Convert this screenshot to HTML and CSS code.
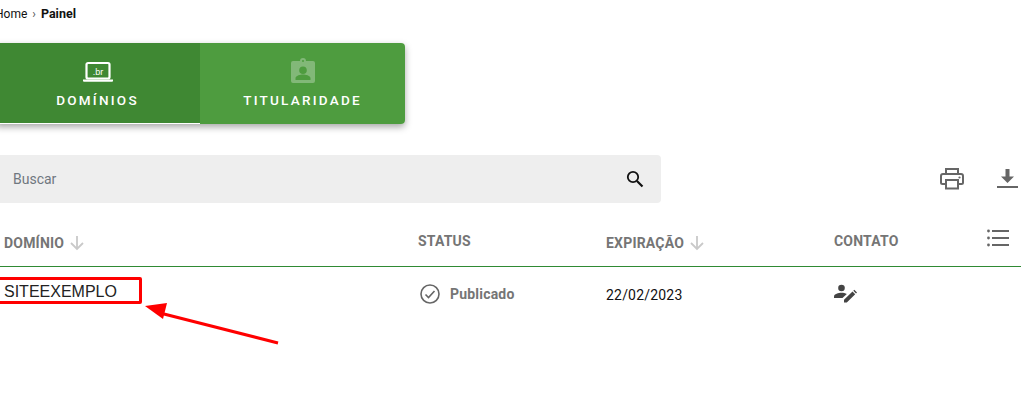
FILE: index.html
```html
<!DOCTYPE html>
<html lang="en">
<head>
    <meta charset="UTF-8">
    <meta name="viewport" content="width=device-width, initial-scale=1.0">
    <title>Painel</title>
    <link rel="stylesheet" href="styles.css">
</head>
<body>
    <div class="page">
        <div class="breadcrumb">
            <span>Home</span>
            <span class="sep">›</span>
            <strong>Painel</strong>
        </div>

        <div class="tabs">
            <div class="tab tab-active">
                <svg class="tab-icon" width="30" height="22" viewBox="0 0 30 22">
                    <rect x="3.500" y="2" width="23" height="15.500" rx="1.500" fill="none" stroke="#fff" stroke-width="2.200"/>
                    <path d="M0 18.500h30v1.300a1 1 0 0 1-1 1H1a1 1 0 0 1-1-1z" fill="#fff"/>
                    <text x="15" y="13.500" class="tab-icon-text">.br</text>
                </svg>
                <span>DOMÍNIOS</span>
            </div>
            <div class="tab">
                <svg class="tab-icon tab-icon-badge" width="24" height="26" viewBox="0 0 24 26">
                    <path d="M2 3h7a3 3 0 0 1 6 0h7a2 2 0 0 1 2 2v18a2 2 0 0 1-2 2H2a2 2 0 0 1-2-2V5a2 2 0 0 1 2-2zm10-1a1 1 0 1 0 0 2 1 1 0 0 0 0-2zm0 6.500a3.800 3.800 0 1 0 0 7.600 3.800 3.800 0 0 0 0-7.600zM4.500 22h15v-1.800c0-2.600-5-3.700-7.500-3.700s-7.500 1.100-7.500 3.700z" fill="#82b878" fill-rule="evenodd"/>
                </svg>
                <span>TITULARIDADE</span>
            </div>
        </div>

        <div class="toolbar">
            <div class="search">
                <span class="search-label">Buscar</span>
                <svg width="18" height="18" viewBox="0 0 18 18">
                    <circle cx="7" cy="7" r="5.200" fill="none" stroke="#111" stroke-width="1.800"/>
                    <path d="M11 11l5.500 5.500" stroke="#111" stroke-width="2.200"/>
                </svg>
            </div>
            <div class="toolbar-icons">
                <svg width="24" height="22" viewBox="0 0 24 22">
                    <path d="M6 6V1h12v5M6 16H2.500A1.500 1.500 0 0 1 1 14.500V8a2 2 0 0 1 2-2h18a2 2 0 0 1 2 2v6.500a1.500 1.500 0 0 1-1.500 1.500H18" fill="none" stroke="#666" stroke-width="2"/>
                    <rect x="6" y="12" width="12" height="8.500" fill="none" stroke="#666" stroke-width="2"/>
                    <circle cx="19.500" cy="9.500" r="1.100" fill="#666"/>
                </svg>
                <svg width="21" height="20" viewBox="0 0 21 20">
                    <path d="M8.500 0h4v7.500h4.500l-6.500 6.500L4 7.500h4.500z" fill="#666"/>
                    <rect x="0" y="17" width="21" height="2" fill="#666"/>
                </svg>
            </div>
        </div>

        <div class="table">
            <div class="row row-head">
                <div class="col col-domain sortable">DOMÍNIO
                    <svg class="sort" width="14" height="16" viewBox="0 0 14 16"><path d="M7 1v13M1 8l6 6 6-6" fill="none" stroke="#c9c9c9" stroke-width="1.800"/></svg>
                </div>
                <div class="col col-status">STATUS</div>
                <div class="col col-exp sortable">EXPIRAÇÃO
                    <svg class="sort" width="14" height="16" viewBox="0 0 14 16"><path d="M7 1v13M1 8l6 6 6-6" fill="none" stroke="#c9c9c9" stroke-width="1.800"/></svg>
                </div>
                <div class="col col-contact">CONTATO</div>
                <svg class="col-menu" width="22" height="18" viewBox="0 0 22 18">
                    <circle cx="1.500" cy="2" r="1.400" fill="#666"/><rect x="5" y="1" width="17" height="2" fill="#666"/>
                    <circle cx="1.500" cy="9" r="1.400" fill="#666"/><rect x="5" y="8" width="17" height="2" fill="#666"/>
                    <circle cx="1.500" cy="16" r="1.400" fill="#666"/><rect x="5" y="15" width="17" height="2" fill="#666"/>
                </svg>
            </div>
            <div class="row row-body">
                <div class="col col-domain domain-name">SITEEXEMPLO</div>
                <div class="col col-status status-cell">
                    <svg width="20" height="20" viewBox="0 0 20 20">
                        <circle cx="10" cy="10" r="9" fill="none" stroke="#666" stroke-width="1.600"/>
                        <path d="M5.500 10.500l3 3 6-6.500" fill="none" stroke="#666" stroke-width="1.600"/>
                    </svg>
                    <span>Publicado</span>
                </div>
                <div class="col col-exp">22/02/2023</div>
                <div class="col col-contact">
                    <svg width="23" height="19" viewBox="0 0 23 19">
                        <circle cx="7.500" cy="4" r="3.300" fill="#444"/>
                        <path d="M0 14v-1.500C0 10 4.500 8.800 7.500 8.800c1.800 0 3.800.4 5.300 1.100L8.500 14z" fill="#444"/>
                        <path d="M10 18.500v-2.800l8.500-8.200 2.700 2.700-8.400 8.300zM19.300 6.700l1-1 2.700 2.700-1 1z" fill="#444"/>
                    </svg>
                </div>
            </div>
        </div>
    </div>

    <!-- annotation drawn over the screenshot -->
    <div class="mark-box"></div>
    <svg class="mark-arrow" width="140" height="50" viewBox="0 0 140 50">
        <path d="M135 41L17 11" stroke="#f00" stroke-width="3" fill="none"/>
        <path d="M2 4l22-3-4 16z" fill="#f00"/>
    </svg>
</body>
</html>
```

FILE: styles.css
```css
body {
    font-family: Roboto, Arial, sans-serif;
    margin: 0;
    background-color: #fff;
    color: #111;
    overflow: hidden;
    height: 405px;
    position: relative;
}
.page {
    margin-left: -5px;
    width: 1026px;
}
.breadcrumb {
    font-size: 12px;
    line-height: 14px;
    padding-top: 7px;
    display: flex;
    gap: 5px;
}
.breadcrumb strong {
    font-size: 12.500px;
    font-weight: 700;
}
.sep {
    color: #555;
}
.tabs {
    display: flex;
    width: 410px;
    height: 81px;
    margin-top: 22px;
    border-radius: 4px;
    box-shadow: 0 3px 7px rgba(0,0,0,0.35);
    overflow: hidden;
}
.tab {
    width: 205px;
    background-color: #4e9c3f;
    color: #fff;
    font-size: 13.500px;
    font-weight: 500;
    letter-spacing: 2.250px;
    display: flex;
    flex-direction: column;
    align-items: center;
    box-sizing: border-box;
    padding-top: 15px;
}
.tab-active {
    background-color: #3f8833;
    border-bottom: 1px solid #fff;
}
.tab-icon {
    margin: 3px 0 9px;
}
.tab-icon-badge {
    margin: 0 0 8px;
}
.tab-icon-text {
    font-size: 9px;
    font-family: "Liberation Sans", sans-serif;
    fill: #fff;
    text-anchor: middle;
    letter-spacing: 0;
}
.toolbar {
    display: flex;
    align-items: center;
    justify-content: space-between;
    margin-top: 31px;
    height: 48px;
}
.search {
    width: 666px;
    height: 48px;
    background-color: #eee;
    border-radius: 4px;
    box-sizing: border-box;
    padding: 0 17px 0 18px;
    display: flex;
    align-items: center;
    justify-content: space-between;
}
.search-label {
    font-size: 14px;
    color: #6f7780;
}
.toolbar-icons {
    display: flex;
    align-items: center;
    gap: 33px;
    padding-right: 3px;
}
.row {
    display: flex;
    position: relative;
    box-sizing: border-box;
}
.row-head {
    height: 64px;
    padding-top: 16px;
    border-bottom: 1px solid #2f8a34;
    font-size: 14px;
    font-weight: 700;
    color: #757575;
    letter-spacing: 0.200px;
    align-items: center;
}
.row-body {
    height: 55px;
    align-items: center;
    font-size: 14px;
    letter-spacing: 0.200px;
}
.col {
    flex: none;
}
.col-domain {
    width: 423px;
    padding-left: 9px;
    box-sizing: border-box;
}
.col-status {
    width: 188px;
}
.col-exp {
    width: 228px;
}
.col-contact {
    flex: 1;
}
.sortable {
    display: flex;
    align-items: center;
    gap: 6px;
}
.row-head .col-status,
.row-head .col-contact {
    margin-bottom: 4px;
}
.col-menu {
    margin: 0 12px 10px 0;
}
.domain-name {
    font-family: "Liberation Sans", Arial, sans-serif;
    font-size: 16px;
    letter-spacing: 0;
    color: #222;
    padding-bottom: 6px;
}
.status-cell {
    display: flex;
    align-items: center;
    gap: 10px;
    padding: 0 0 2px 2px;
    box-sizing: border-box;
    font-size: 14px;
    font-weight: 700;
    color: #757575;
}
.mark-box {
    position: absolute;
    left: -6px;
    top: 277px;
    width: 142px;
    height: 21px;
    border: 3px solid #f00;
    border-radius: 2px;
}
.mark-arrow {
    position: absolute;
    left: 143px;
    top: 302px;
}
```
